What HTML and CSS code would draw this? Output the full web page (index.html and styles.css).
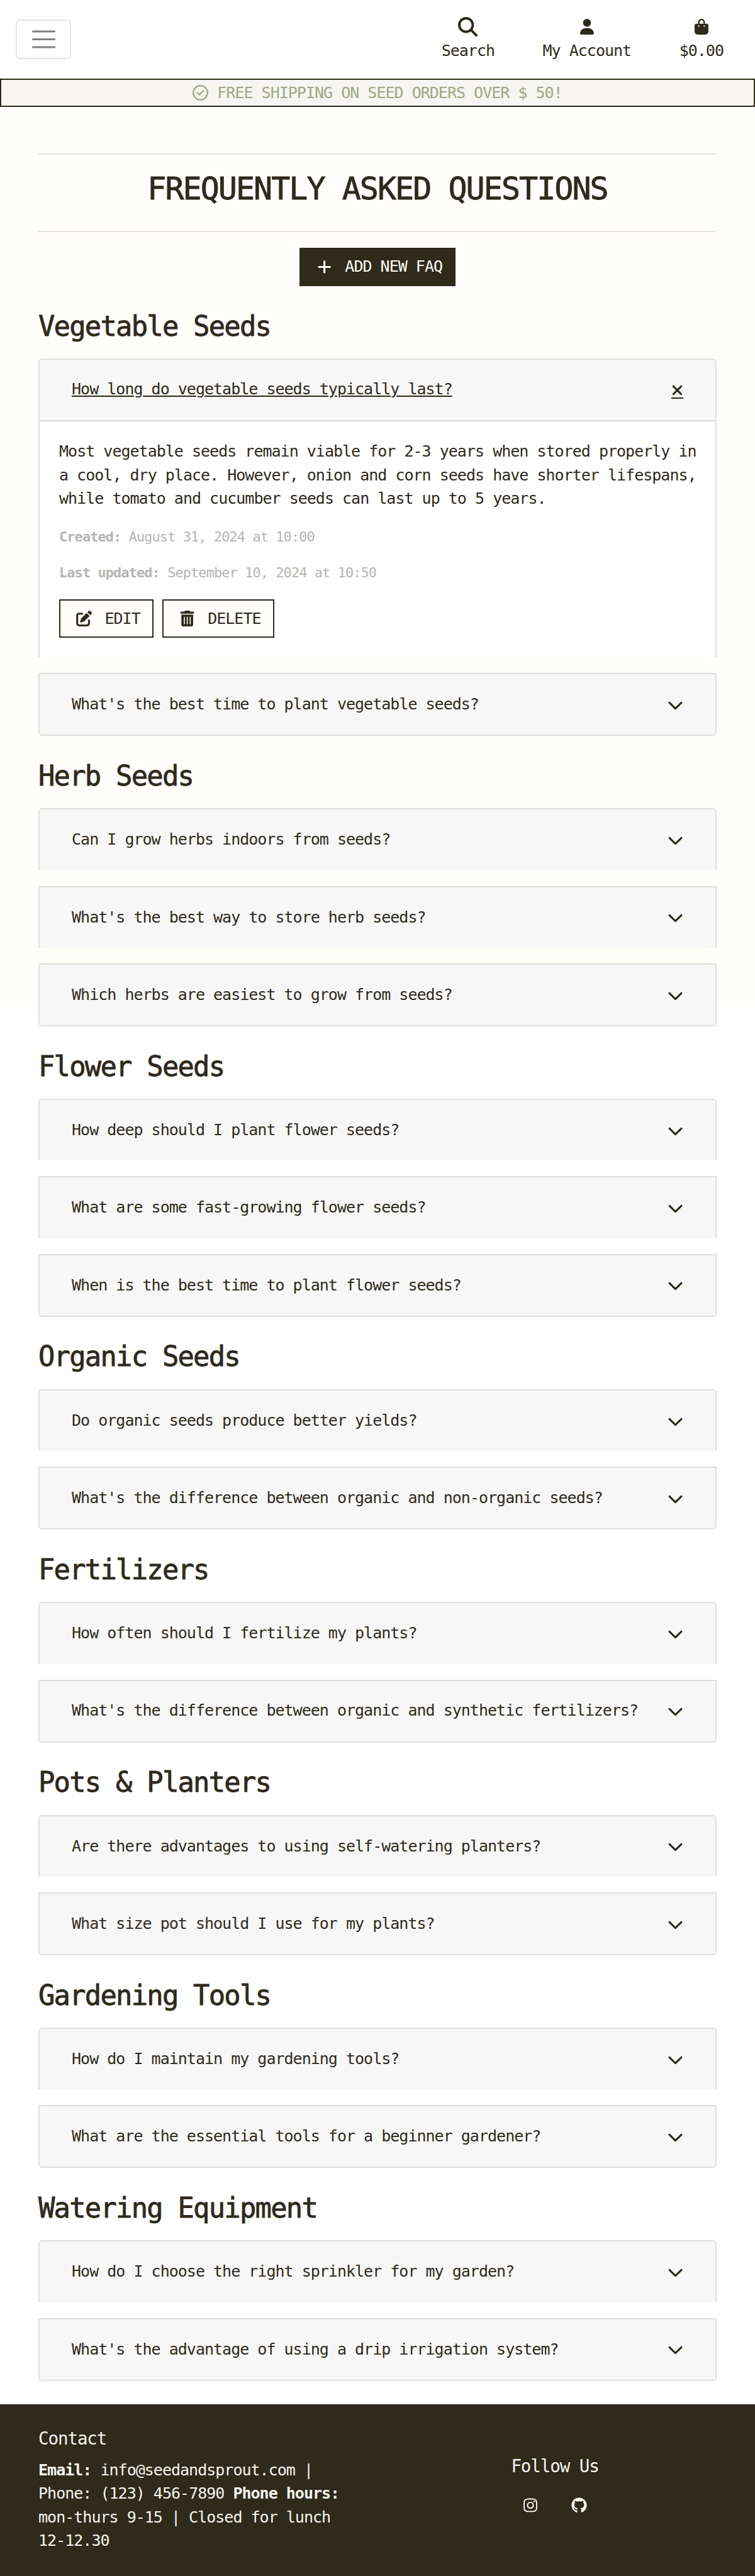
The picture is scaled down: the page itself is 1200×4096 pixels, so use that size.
FILE: index.html
```html
<!DOCTYPE html>
<html lang="en">
<head>
<meta charset="utf-8">
<title>Frequently Asked Questions</title>
<link rel="stylesheet" href="styles.css">
</head>
<body>
<svg class="sprite" xmlns="http://www.w3.org/2000/svg">
  <symbol id="search" viewBox="0 0 512 512"><path d="M416 208c0 45.9-14.9 88.3-40 122.7L502.6 457.4c12.5 12.5 12.5 32.8 0 45.3s-32.8 12.5-45.3 0L330.7 376c-34.4 25.2-76.8 40-122.7 40C93.1 416 0 322.9 0 208S93.1 0 208 0S416 93.1 416 208zM208 352a144 144 0 1 0 0-288 144 144 0 1 0 0 288z"/></symbol>
  <symbol id="user" viewBox="0 0 448 512"><path d="M224 256A128 128 0 1 0 224 0a128 128 0 1 0 0 256zm-45.7 48C79.8 304 0 383.8 0 482.3C0 498.7 13.3 512 29.7 512l388.6 0c16.4 0 29.7-13.3 29.7-29.7C448 383.8 368.2 304 269.7 304l-91.4 0z"/></symbol>
  <symbol id="bag" viewBox="0 0 448 512"><path d="M160 112c0-35.3 28.7-64 64-64s64 28.7 64 64l0 48-128 0 0-48zm-48 48l-64 0c-26.5 0-48 21.5-48 48L0 416c0 53 43 96 96 96l256 0c53 0 96-43 96-96l0-208c0-26.5-21.5-48-48-48l-64 0 0-48C336 50.1 285.9 0 224 0S112 50.1 112 112l0 48zm24 48a24 24 0 1 1 0 48 24 24 0 1 1 0-48zm152 24a24 24 0 1 1 48 0 24 24 0 1 1 -48 0z"/></symbol>
  <symbol id="check" viewBox="0 0 512 512"><path d="M256 48a208 208 0 1 1 0 416 208 208 0 1 1 0-416zm0 464A256 256 0 1 0 256 0a256 256 0 1 0 0 512zM369 209c9.4-9.4 9.4-24.6 0-33.9s-24.6-9.4-33.9 0l-111 111-47-47c-9.4-9.4-24.6-9.4-33.9 0s-9.4 24.6 0 33.9l64 64c9.4 9.4 24.6 9.4 33.9 0L369 209z"/></symbol>
  <symbol id="plus" viewBox="0 0 448 512"><path d="M256 80c0-17.7-14.3-32-32-32s-32 14.3-32 32l0 144L48 224c-17.7 0-32 14.3-32 32s14.3 32 32 32l144 0 0 144c0 17.7 14.3 32 32 32s32-14.3 32-32l0-144 144 0c17.7 0 32-14.3 32-32s-14.3-32-32-32l-144 0 0-144z"/></symbol>
  <symbol id="close" viewBox="0 0 384 512"><path d="M342.6 150.6c12.5-12.5 12.5-32.8 0-45.3s-32.8-12.5-45.3 0L192 210.7 86.6 105.4c-12.5-12.5-32.8-12.5-45.3 0s-12.5 32.8 0 45.3L146.7 256 41.4 361.4c-12.5 12.5-12.5 32.8 0 45.3s32.8 12.5 45.3 0L192 301.3 297.4 406.6c12.5 12.5 32.8 12.5 45.3 0s12.5-32.8 0-45.3L237.3 256 342.6 150.6z"/></symbol>
  <symbol id="down" viewBox="0 0 512 512"><path d="M233.4 406.6c12.5 12.5 32.8 12.5 45.3 0l192-192c12.5-12.5 12.5-32.8 0-45.3s-32.8-12.5-45.3 0L256 338.7 86.6 169.4c-12.5-12.5-32.8-12.5-45.3 0s-12.5 32.8 0 45.3l192 192z"/></symbol>
  <symbol id="edit" viewBox="0 0 512 512"><path d="M471.6 21.7c-21.9-21.9-57.3-21.9-79.2 0L362.3 51.7l97.9 97.9 30.1-30.1c21.9-21.9 21.9-57.3 0-79.2L471.6 21.7zm-299.2 220c-6.1 6.1-10.8 13.6-13.5 21.9l-29.6 88.8c-2.9 8.6-.6 18.1 5.8 24.6s15.9 8.7 24.6 5.8l88.8-29.6c8.2-2.7 15.7-7.4 21.9-13.5L437.7 172.3 339.7 74.3 172.4 241.7zM96 64C43 64 0 107 0 160L0 416c0 53 43 96 96 96l256 0c53 0 96-43 96-96l0-96c0-17.7-14.3-32-32-32s-32 14.3-32 32l0 96c0 17.7-14.3 32-32 32L96 448c-17.7 0-32-14.3-32-32l0-256c0-17.7 14.3-32 32-32l96 0c17.7 0 32-14.3 32-32s-14.3-32-32-32L96 64z"/></symbol>
  <symbol id="trash" viewBox="0 0 448 512"><path d="M135.2 17.7C140.6 6.8 151.7 0 163.8 0L284.2 0c12.1 0 23.2 6.8 28.6 17.7L320 32l96 0c17.7 0 32 14.3 32 32s-14.3 32-32 32L32 96C14.3 96 0 81.7 0 64S14.3 32 32 32l96 0 7.2-14.3zM32 128l384 0 0 320c0 35.3-28.7 64-64 64L96 512c-35.3 0-64-28.7-64-64l0-320zm96 64c-8.8 0-16 7.2-16 16l0 224c0 8.8 7.2 16 16 16s16-7.2 16-16l0-224c0-8.8-7.2-16-16-16zm96 0c-8.8 0-16 7.2-16 16l0 224c0 8.8 7.2 16 16 16s16-7.2 16-16l0-224c0-8.8-7.2-16-16-16zm96 0c-8.8 0-16 7.2-16 16l0 224c0 8.8 7.2 16 16 16s16-7.2 16-16l0-224c0-8.8-7.2-16-16-16z"/></symbol>
  <symbol id="instagram" viewBox="0 0 448 512"><path d="M224.1 141c-63.6 0-114.9 51.3-114.9 114.9s51.3 114.9 114.9 114.9S339 319.5 339 255.9 287.7 141 224.1 141zm0 189.6c-41.1 0-74.7-33.5-74.7-74.7s33.5-74.7 74.7-74.7 74.7 33.5 74.7 74.7-33.6 74.7-74.7 74.7zm146.4-194.3c0 14.9-12 26.8-26.8 26.8-14.9 0-26.8-12-26.8-26.8s12-26.8 26.8-26.8 26.8 12 26.8 26.8zm76.1 27.2c-1.7-35.9-9.9-67.7-36.2-93.9-26.2-26.2-58-34.4-93.9-36.2-37-2.1-147.9-2.1-184.9 0-35.8 1.7-67.6 9.9-93.9 36.1s-34.4 58-36.2 93.9c-2.1 37-2.1 147.9 0 184.9 1.7 35.9 9.9 67.7 36.2 93.9s58 34.4 93.9 36.2c37 2.1 147.9 2.1 184.9 0 35.9-1.7 67.7-9.9 93.9-36.2 26.2-26.2 34.4-58 36.2-93.9 2.1-37 2.1-147.8 0-184.8zM398.8 388c-7.8 19.6-22.9 34.7-42.6 42.6-29.5 11.7-99.5 9-132.1 9s-102.7 2.6-132.1-9c-19.6-7.8-34.7-22.9-42.6-42.6-11.7-29.5-9-99.5-9-132.1s-2.6-102.7 9-132.1c7.8-19.6 22.9-34.7 42.6-42.6 29.5-11.7 99.5-9 132.1-9s102.7-2.6 132.1 9c19.6 7.8 34.7 22.9 42.6 42.6 11.7 29.5 9 99.5 9 132.1s2.7 102.7-9 132.1z"/></symbol>
  <symbol id="github" viewBox="0 0 496 512"><path d="M165.9 397.4c0 2-2.3 3.6-5.2 3.6-3.3.3-5.6-1.3-5.6-3.6 0-2 2.3-3.6 5.2-3.6 3-.3 5.6 1.3 5.6 3.6zm-31.1-4.5c-.7 2 1.3 4.3 4.3 4.9 2.6 1 5.6 0 6.2-2s-1.3-4.3-4.3-5.2c-2.6-.7-5.5.3-6.2 2.3zm44.2-1.7c-2.9.7-4.9 2.6-4.6 4.9.3 2 2.9 3.3 5.9 2.6 2.9-.7 4.9-2.6 4.6-4.6-.3-1.9-3-3.2-5.9-2.9zM244.8 8C106.1 8 0 113.3 0 252c0 110.9 69.8 205.8 169.5 239.2 12.8 2.3 17.3-5.6 17.3-12.1 0-6.2-.3-40.4-.3-61.4 0 0-70 15-84.7-29.8 0 0-11.4-29.1-27.8-36.6 0 0-22.9-15.7 1.6-15.4 0 0 24.9 2 38.6 25.8 21.9 38.6 58.6 27.5 72.9 20.9 2.3-16 8.8-27.1 16-33.7-55.9-6.2-112.3-14.3-112.3-110.5 0-27.5 7.6-41.3 23.6-58.9-2.6-6.5-11.1-33.3 2.6-67.9 20.9-6.5 69 27 69 27 20-5.6 41.5-8.5 62.8-8.5s42.8 2.9 62.8 8.5c0 0 48.1-33.6 69-27 13.7 34.7 5.2 61.4 2.6 67.9 16 17.7 25.8 31.5 25.8 58.9 0 96.5-58.9 104.2-114.8 110.5 9.2 7.9 17 22.9 17 46.4 0 33.7-.3 75.4-.3 83.6 0 6.5 4.6 14.4 17.3 12.1C428.2 457.8 496 362.9 496 252 496 113.3 383.5 8 244.8 8z"/></symbol>
</svg>

<header class="navbar">
  <button class="toggler" aria-label="Menu"><svg viewBox="0 0 30 30"><path stroke="currentColor" stroke-width="2" stroke-linecap="round" d="M4 7h22M4 15h22M4 23h22"/></svg></button>
  <nav class="tools">
    <a class="tool"><span class="slot"><svg class="i-search"><use href="#search"/></svg></span>Search</a>
    <a class="tool"><span class="slot"><svg class="i-small"><use href="#user"/></svg></span>My Account</a>
    <a class="tool"><span class="slot"><svg class="i-small"><use href="#bag"/></svg></span>$0.00</a>
  </nav>
</header>

<div class="banner"><svg><use href="#check"/></svg><span>FREE SHIPPING ON SEED ORDERS OVER $ 50!</span></div>

<main class="page">
  <h1>FREQUENTLY ASKED QUESTIONS</h1>
  <div class="add"><a class="btn dark"><svg><use href="#plus"/></svg>ADD NEW FAQ</a></div>

  <section>
    <h2>Vegetable Seeds</h2>
    <div class="accordion">
      <article class="card">
        <div class="question open"><u>How long do vegetable seeds typically last?</u><span class="close"><svg><use href="#close"/></svg></span></div>
        <div class="answer">
          <p>Most vegetable seeds remain viable for 2-3 years when stored properly in a cool, dry place. However, onion and corn seeds have shorter lifespans, while tomato and cucumber seeds can last up to 5 years.</p>
          <p class="meta"><b>Created:</b> August 31, 2024 at 10:00</p>
          <p class="meta"><b>Last updated:</b> September 10, 2024 at 10:50</p>
          <div class="actions"><a class="btn"><svg><use href="#edit"/></svg>EDIT</a><a class="btn"><svg><use href="#trash"/></svg>DELETE</a></div>
        </div>
      </article>
      <article class="card"><div class="question">What's the best time to plant vegetable seeds?<svg><use href="#down"/></svg></div></article>
    </div>
  </section>

  <section>
    <h2>Herb Seeds</h2>
    <div class="accordion">
      <article class="card"><div class="question">Can I grow herbs indoors from seeds?<svg><use href="#down"/></svg></div></article>
      <article class="card"><div class="question">What's the best way to store herb seeds?<svg><use href="#down"/></svg></div></article>
      <article class="card"><div class="question">Which herbs are easiest to grow from seeds?<svg><use href="#down"/></svg></div></article>
    </div>
  </section>

  <section>
    <h2>Flower Seeds</h2>
    <div class="accordion">
      <article class="card"><div class="question">How deep should I plant flower seeds?<svg><use href="#down"/></svg></div></article>
      <article class="card"><div class="question">What are some fast-growing flower seeds?<svg><use href="#down"/></svg></div></article>
      <article class="card"><div class="question">When is the best time to plant flower seeds?<svg><use href="#down"/></svg></div></article>
    </div>
  </section>

  <section>
    <h2>Organic Seeds</h2>
    <div class="accordion">
      <article class="card"><div class="question">Do organic seeds produce better yields?<svg><use href="#down"/></svg></div></article>
      <article class="card"><div class="question">What's the difference between organic and non-organic seeds?<svg><use href="#down"/></svg></div></article>
    </div>
  </section>

  <section>
    <h2>Fertilizers</h2>
    <div class="accordion">
      <article class="card"><div class="question">How often should I fertilize my plants?<svg><use href="#down"/></svg></div></article>
      <article class="card"><div class="question">What's the difference between organic and synthetic fertilizers?<svg><use href="#down"/></svg></div></article>
    </div>
  </section>

  <section>
    <h2>Pots &amp; Planters</h2>
    <div class="accordion">
      <article class="card"><div class="question">Are there advantages to using self-watering planters?<svg><use href="#down"/></svg></div></article>
      <article class="card"><div class="question">What size pot should I use for my plants?<svg><use href="#down"/></svg></div></article>
    </div>
  </section>

  <section>
    <h2>Gardening Tools</h2>
    <div class="accordion">
      <article class="card"><div class="question">How do I maintain my gardening tools?<svg><use href="#down"/></svg></div></article>
      <article class="card"><div class="question">What are the essential tools for a beginner gardener?<svg><use href="#down"/></svg></div></article>
    </div>
  </section>

  <section>
    <h2>Watering Equipment</h2>
    <div class="accordion">
      <article class="card"><div class="question">How do I choose the right sprinkler for my garden?<svg><use href="#down"/></svg></div></article>
      <article class="card"><div class="question">What's the advantage of using a drip irrigation system?<svg><use href="#down"/></svg></div></article>
    </div>
  </section>
</main>

<footer class="footer">
  <div class="contact">
    <h5>Contact</h5>
    <p><b>Email:</b> info@seedandsprout.com | Phone: (123) 456-7890 <b>Phone hours:</b> mon-thurs 9-15 | Closed for lunch 12-12.30</p>
  </div>
  <div class="follow">
    <h5>Follow Us</h5>
    <div class="social"><svg class="i-insta"><use href="#instagram"/></svg><svg class="i-git"><use href="#github"/></svg></div>
  </div>
</footer>
</body>
</html>
```

FILE: styles.css
```css
* { box-sizing: border-box; margin: 0; padding: 0; }

:root {
  --ink: #2e2a1c;
  --ivory: #fffefa;
  --line: #dfdfdf;
}

body {
  background: #fff;
  color: var(--ink);
  font: 25px/37.5px "DejaVu Sans Mono", monospace;
  letter-spacing: -.0395em;
}

svg { fill: currentColor; flex: none; display: block; }
.sprite { display: none; }
h1, h2, h5 { font-weight: 400; letter-spacing: -.0395em; }
h1, h2 { -webkit-text-stroke: .8px currentColor; }

/* top bar */
.navbar {
  height: 125px;
  padding: 0 50px 0 25px;
  display: flex;
  justify-content: space-between;
  align-items: flex-start;
}
.toggler {
  margin-top: 31px;
  width: 88px;
  height: 63px;
  display: flex;
  align-items: center;
  justify-content: center;
  border: 2px solid #e5e5e5;
  border-radius: 6px;
  background: none;
  color: #808080;
}
.toggler svg { width: 46.9px; height: 46.9px; }
.tools { display: flex; gap: 76.5px; padding-top: 27.3px; }
.tool { display: flex; flex-direction: column; align-items: center; }
.slot { height: 34.6px; }
.i-search { width: 31.25px; height: 31.25px; }
.i-small { width: 21.9px; height: 25px; margin-top: 2.4px; }

.banner {
  height: 45.3px;
  display: flex;
  align-items: center;
  justify-content: center;
  gap: 14px;
  background: #f6f5f0;
  border: 2px solid var(--ink);
  color: #9ca986;
}
.banner svg { width: 25px; height: 25px; margin-top: -1px; }

/* ivory backdrop covers only the first screen */
.page {
  padding: 73.4px 61px 37.5px;
  background: linear-gradient(var(--ivory), var(--ivory)) no-repeat 0 0 / 100% 1429px;
}
h1 {
  height: 125px;
  padding-top: 24.6px;
  font-size: 50px;
  line-height: 60px;
  text-align: center;
  border-top: 2px solid #e5e4e1;
  border-bottom: 2px solid #e5e4e1;
}
.add { display: flex; justify-content: center; padding: 25px 0 .6px; }
.btn {
  height: 61px;
  padding: 0 19px 0 22px;
  display: flex;
  align-items: center;
  border: 2px solid var(--ink);
  background: var(--ivory);
}
.btn svg { width: 31.25px; height: 25px; margin-right: 17.2px; }
.btn.dark { background: var(--ink); color: #fffefa; }

h2 {
  padding: 33.5px 0 21.5px;
  font-size: 43.75px;
  line-height: 60px;
}
.accordion { display: flex; flex-direction: column; gap: 25px; }
.card {
  border: solid var(--line);
  border-width: 2px 2px 0;
  background: #fff;
  overflow: hidden;
}
.card:first-child { border-radius: 6px 6px 0 0; }
.card:last-child { border-bottom-width: 2px; border-radius: 0 0 6px 6px; }
.question {
  height: 96.4px;
  padding: 0 51px 1px;
  display: flex;
  align-items: center;
  justify-content: space-between;
  background: #f7f7f7;
}
.card:last-child .question { height: 96px; }
.question.open { height: 98px; padding-bottom: 3px; border-bottom: 2px solid #d8d8d8; }
.question u { text-decoration-thickness: 2px; text-underline-offset: 2px; }
.question svg { width: 25px; height: 25px; margin-top: 1px; }
.close { border-bottom: 2px solid var(--ink); margin-top: 5px; }
.question .close svg { width: 19px; height: 25px; margin: 0 0 -1px; }

.answer { height: 375px; padding: 29px 20px 0 31px; }
.meta {
  margin-top: 22.9px;
  height: 34.6px;
  font-size: 21.875px;
  letter-spacing: -.0395em;
  color: #b4b4b1;
}
.actions { display: flex; gap: 14px; margin-top: 26.2px; }

/* footer */
.footer {
  height: 272.7px;
  padding: 37.8px 61px 0;
  display: grid;
  grid-template-columns: 539px 564px;
  background: var(--ink);
  color: #f6f5f0;
}
.footer h5 { font-size: 27.5px; line-height: 33px; }
.contact p { margin-top: 14.6px; width: 500px; }
.follow { padding-top: 44px; display: flex; flex-direction: column; align-items: center; }
.social { display: flex; gap: 54px; margin-top: 33.3px; align-items: center; }
.i-insta { width: 22px; height: 25px; }
.i-git { width: 25px; height: 25px; }
```
